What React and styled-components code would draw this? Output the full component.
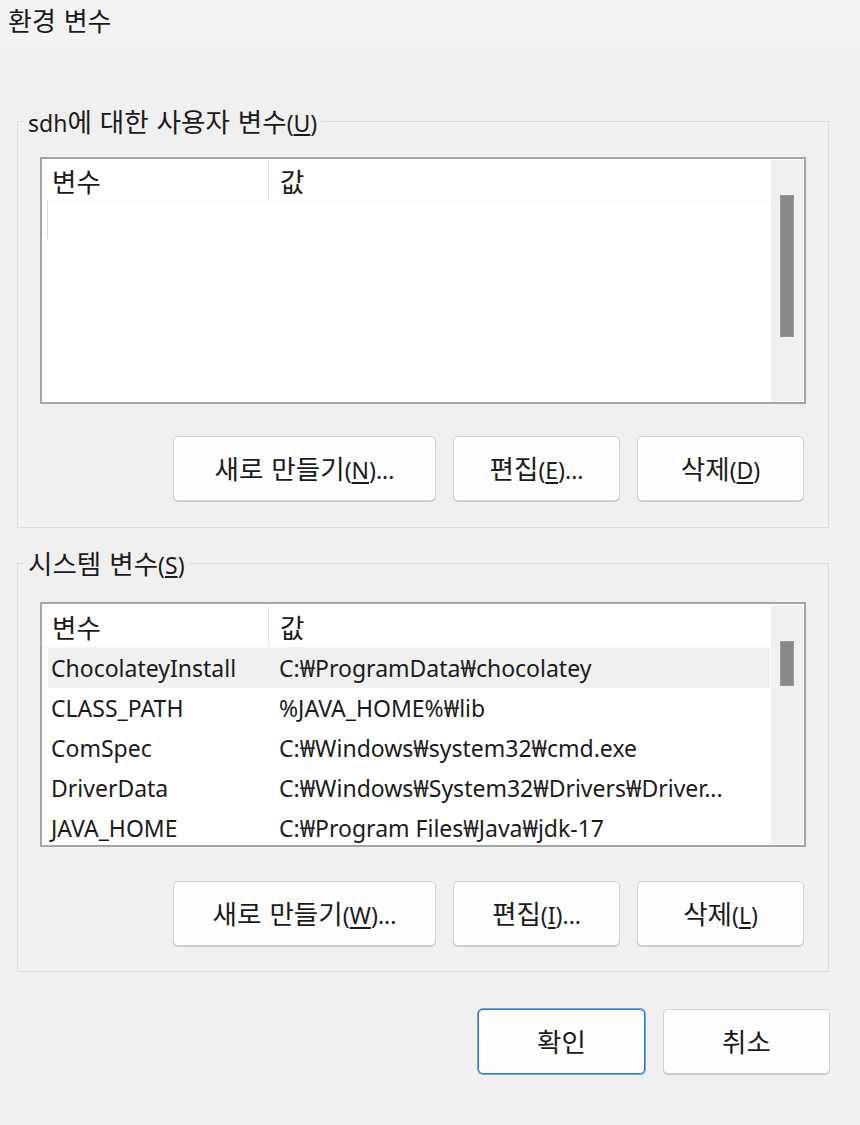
import React from "react";
import styled, { createGlobalStyle } from "styled-components";

const GlobalStyle = createGlobalStyle`
    html, body {
        margin: 0;
        padding: 0;
        background: #f0f0f0;
    }
    body {
        font-family: "Noto Sans", "Noto Sans CJK KR", sans-serif;
        color: #1b1b1b;
    }
`;

const Window = styled.div`
    width: 860px;
    height: 1125px;
    background: #f0f0f0;
    overflow: hidden;
`;

// Hangul runs in the CJK face sit a touch small next to Latin, so they get scaled up
const Ko = styled.span`
    font-family: "Noto Sans CJK KR", sans-serif;
    font-size: 1.155em;
    word-spacing: 2px;
`;

const TitleBar = styled.div`
    height: 50px;
    padding-left: 8px;
    background: linear-gradient(to bottom, #f3f3f3 90%, #f0f0f0 100%);
    font-family: "Noto Sans CJK KR", sans-serif;
    font-size: 26px;
    line-height: 40px;
    word-spacing: 2px;
`;

const Content = styled.div`
    padding: 0 31px 0 17px;
`;

const Group = styled.fieldset`
    margin: ${props => props.$top}px 0 0 0;
    padding: 0 22px ${props => props.$bottom}px 22px;
    border: 1px solid #dcdcdc;
    min-width: 0;
`;

const Legend = styled.legend`
    margin-left: -16px;
    padding: 0 4px;
    height: 28px;
    font-size: 23px;
    line-height: 28px;
`;

const ListBox = styled.div`
    display: flex;
    margin-top: ${props => props.$top}px;
    height: ${props => props.$height}px;
    box-sizing: border-box;
    border: 2px solid #a2a6ab;
    background: #fff;
    overflow: hidden;
`;

const Columns = styled.div`
    flex: 1;
    min-width: 0;
    padding-top: 1px;
    overflow: hidden;
`;

const Row = styled.div`
    display: grid;
    grid-template-columns: 220px 1fr;
    height: ${props => props.$height || 40}px;
    margin-left: 6px;
    align-items: center;
    font-size: 23px;
    white-space: nowrap;
    background: ${props => (props.$selected ? "#f0f0f0" : "transparent")};
`;

const HeaderRow = styled(Row)`
    align-items: stretch;
    margin-left: 0;
    padding-left: 6px;
    border-bottom: 1px solid #f6f6f6;
`;

const HeaderCell = styled.div`
    display: flex;
    align-items: center;
    padding-left: ${props => (props.$second ? 11 : 4)}px;
    border-left: ${props => (props.$second ? "1px solid #e6e6e6" : "none")};
    font-family: "Noto Sans CJK KR", sans-serif;
    font-size: 26.5px;
`;

const Cell = styled.div`
    padding-left: ${props => (props.$second ? 11 : 3)}px;
    overflow: hidden;
    text-overflow: ellipsis;
`;

// left edge of the focus box an empty list still draws
const EmptyFocus = styled.div`
    width: 1px;
    height: 38px;
    margin-left: 5px;
    background: #dadada;
`;

const ScrollTrack = styled.div`
    width: 34px;
    flex-shrink: 0;
    box-sizing: border-box;
    border: 1px solid #fff;
    background: #f0f0f0;
    padding-left: 9px;
`;

const ScrollThumb = styled.div`
    width: 14px;
    margin-top: ${props => props.$top}px;
    height: ${props => props.$height}px;
    background: #888;
    border: 1px solid #9a9a9a;
    box-sizing: border-box;
`;

const ButtonRow = styled.div`
    display: flex;
    justify-content: flex-end;
    gap: 17px;
    margin-top: ${props => props.$top}px;
    padding-right: 2px;
`;

const Button = styled.button`
    width: ${props => props.$width || 167}px;
    height: 65px;
    box-sizing: border-box;
    background: #fdfdfd;
    border: 1px solid ${props => (props.$primary ? "#2b7bd1" : "#d3d3d3")};
    box-shadow: ${props =>
        props.$primary ? "0 0 0 1px #6aa6e4" : "0 1px 0 #c9c9c9"};
    border-radius: 5px;
    font-family: "Noto Sans", "Noto Sans CJK KR", sans-serif;
    font-size: 23px;
    line-height: 30px;
    color: #1b1b1b;
    padding: 0;
    cursor: default;

    u {
        text-underline-offset: 3px;
    }
`;

const Footer = styled.div`
    display: flex;
    justify-content: flex-end;
    gap: 18px;
    margin-top: 37px;
    margin-right: -1px;
`;

const systemVars = [
    ["ChocolateyInstall", "C:₩ProgramData₩chocolatey"],
    ["CLASS_PATH", "%JAVA_HOME%₩lib"],
    ["ComSpec", "C:₩Windows₩system32₩cmd.exe"],
    ["DriverData", "C:₩Windows₩System32₩Drivers₩Driver..."],
    ["JAVA_HOME", "C:₩Program Files₩Java₩jdk-17"],
];

const VarList = ({ top, height, headerHeight, rows, thumbTop, thumbHeight }) => (
    <ListBox $top={top} $height={height}>
        <Columns>
            <HeaderRow $height={headerHeight}>
                <HeaderCell>변수</HeaderCell>
                <HeaderCell $second>값</HeaderCell>
            </HeaderRow>
            {rows.length === 0 && <EmptyFocus />}
            {rows.map(([name, value], i) => (
                <Row key={name} $selected={i === 0}>
                    <Cell>{name}</Cell>
                    <Cell $second>{value}</Cell>
                </Row>
            ))}
        </Columns>
        <ScrollTrack>
            <ScrollThumb $top={thumbTop} $height={thumbHeight} />
        </ScrollTrack>
    </ListBox>
);

const ActionButtons = ({ top, keys }) => (
    <ButtonRow $top={top}>
        <Button $width={263}>
            <Ko>새로 만들기</Ko>(<u>{keys[0]}</u>)...
        </Button>
        <Button>
            <Ko>편집</Ko>(<u>{keys[1]}</u>)...
        </Button>
        <Button>
            <Ko>삭제</Ko>(<u>{keys[2]}</u>)
        </Button>
    </ButtonRow>
);

const App = () => (
    <Window>
        <GlobalStyle />
        <TitleBar>환경 변수</TitleBar>
        <Content>
            <Group $top={57} $bottom={26}>
                <Legend>
                    sdh<Ko>에 대한 사용자 변수</Ko>(<u>U</u>)
                </Legend>
                <VarList
                    top={22}
                    height={247}
                    headerHeight={40}
                    rows={[]}
                    thumbTop={35}
                    thumbHeight={142}
                />
                <ActionButtons top={32} keys={["N", "E", "D"]} />
            </Group>
            <Group $top={21} $bottom={25}>
                <Legend>
                    <Ko>시스템 변수</Ko>(<u>S</u>)
                </Legend>
                <VarList
                    top={25}
                    height={245}
                    headerHeight={42}
                    rows={systemVars}
                    thumbTop={36}
                    thumbHeight={45}
                />
                <ActionButtons top={34} keys={["W", "I", "L"]} />
            </Group>
            <Footer>
                <Button $primary>
                    <Ko>확인</Ko>
                </Button>
                <Button>
                    <Ko>취소</Ko>
                </Button>
            </Footer>
        </Content>
    </Window>
);

export default App;
